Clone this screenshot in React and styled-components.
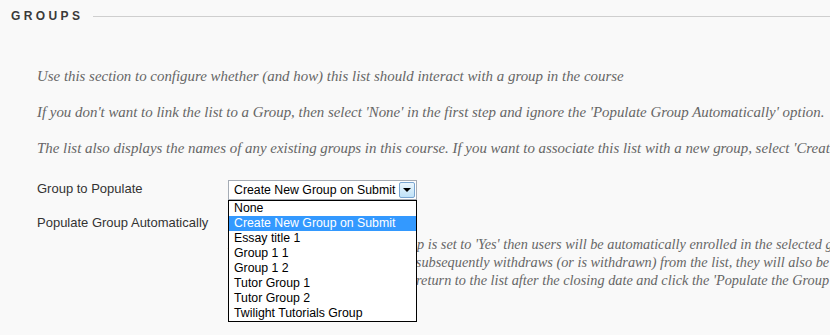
import React from 'react';
import styled, { createGlobalStyle } from 'styled-components';

const Global = createGlobalStyle`
  html, body {
    margin: 0;
    padding: 0;
    background: #f9f9f9;
    overflow: hidden;
  }
`;

const Page = styled.div`
  width: 830px;
  height: 335px;
  overflow: hidden;
  background: #f9f9f9;
  font-family: "Liberation Sans", Arial, sans-serif;
`;

const Heading = styled.div`
  display: flex;
  align-items: center;
  gap: 10px;
  padding: 9px 0 0 11px;
  height: 14px;
`;

const HeadingText = styled.h2`
  margin: 0;
  font-size: 12px;
  font-weight: bold;
  letter-spacing: 3.4px;
  color: #3a3a3a;
`;

const Rule = styled.div`
  flex: 1;
  height: 1px;
  background: #cfcfcf;
`;

const Body = styled.div`
  padding: 44px 0 0 37px;
`;

const Note = styled.p`
  margin: 0 0 ${p => (p.gap === undefined ? 18 : p.gap)}px;
  font-family: "Liberation Serif", "Times New Roman", serif;
  font-style: italic;
  font-size: ${p => p.size || 14.9}px;
  line-height: 18px;
  color: #666;
  white-space: nowrap;
`;

const Form = styled.div`
  display: grid;
  grid-template-columns: 191px auto;
  row-gap: 14px;
  margin-top: 23px;
`;

const Label = styled.div`
  font-size: 13px;
  color: #333;
  line-height: 18px;
`;

const Field = styled.div`
  position: relative;
  display: flex;
  flex-direction: column;
`;

const Select = styled.div`
  display: flex;
  align-items: stretch;
  width: 187px;
  height: 18px;
  border: 1px solid #a5acb5;
  background: #fff;
`;

const SelectValue = styled.span`
  flex: 1;
  padding-left: 5px;
  font-size: 12.3px;
  line-height: 18px;
  color: #000;
`;

const SelectButton = styled.span`
  width: 14px;
  margin: 1px;
  border: 1px solid #7aa6d1;
  border-radius: 2px;
  background: linear-gradient(#eaf6fd, #bfe2f8);
  display: flex;
  align-items: center;
  justify-content: center;
`;

const Arrow = styled.span`
  width: 0;
  height: 0;
  border-left: 4px solid transparent;
  border-right: 4px solid transparent;
  border-top: 4px solid #000;
`;

const List = styled.ul`
  position: absolute;
  top: 20px;
  left: 0;
  z-index: 2;
  margin: 0;
  padding: 0;
  list-style: none;
  width: 187px;
  border: 1px solid #000;
  background: #fff;
`;

const Option = styled.li`
  padding-left: 5px;
  font-size: 12.3px;
  line-height: 15px;
  height: 15px;
  color: ${p => (p.selected ? '#fff' : '#000')};
  background: ${p => (p.selected ? '#3399ff' : 'transparent')};
`;

const Help = styled.div`
  margin-top: 21px;
`;

const options = [
  'None',
  'Create New Group on Submit',
  'Essay title 1',
  'Group 1 1',
  'Group 1 2',
  'Tutor Group 1',
  'Tutor Group 2',
  'Twilight Tutorials Group',
];

export default function App() {
  return (
    <Page>
      <Global />
      <Heading>
        <HeadingText>GROUPS</HeadingText>
        <Rule />
      </Heading>
      <Body>
        <Note>Use this section to configure whether (and how) this list should interact with a group in the course</Note>
        <Note>If you don't want to link the list to a Group, then select 'None' in the first step and ignore the 'Populate Group Automatically' option.</Note>
        <Note>The list also displays the names of any existing groups in this course. If you want to associate this list with a new group, select 'Create New Group on Submit'.</Note>
        <Form>
          <Label>Group to Populate</Label>
          <Field>
            <Select>
              <SelectValue>Create New Group on Submit</SelectValue>
              <SelectButton><Arrow /></SelectButton>
            </Select>
            <List>
              {options.map(o => (
                <Option key={o} selected={o === 'Create New Group on Submit'}>{o}</Option>
              ))}
            </List>
          </Field>
          <Label>Populate Group Automatically</Label>
          <Field>
            <Help>
              <Note gap={0} size={14.3}>If your Automatic Populate Group is set to 'Yes' then users will be automatically enrolled in the selected group</Note>
              <Note gap={0} size={14.3}>when they first sign up. If a user subsequently withdraws (or is withdrawn) from the list, they will also be removed.</Note>
              <Note gap={0} size={14.3}>removed. If not, you will need to return to the list after the closing date and click the 'Populate the Group' button.</Note>
            </Help>
          </Field>
        </Form>
      </Body>
    </Page>
  );
}
